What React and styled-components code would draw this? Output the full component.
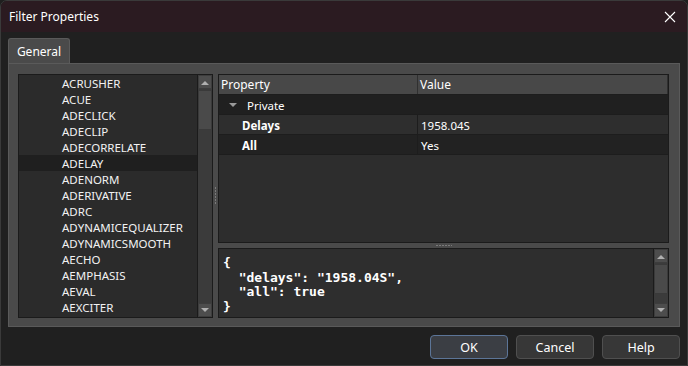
import React from 'react';
import styled, { createGlobalStyle } from 'styled-components';

const GlobalStyle = createGlobalStyle`
  html, body {
    margin: 0;
    padding: 0;
    background: #1f1f1f;
  }
  body {
    font-family: "Noto Sans", "Open Sans", sans-serif;
    font-size: 11.5px;
    color: #f2f2f2;
  }
`;

const Window = styled.div`
  width: 688px;
  height: 366px;
  box-sizing: border-box;
  background: #202020;
  border: 1px solid #3a3a3a;
  border-radius: 7px 7px 0 0;
  overflow: hidden;
  display: flex;
  flex-direction: column;
`;

const TitleBar = styled.div`
  height: 31px;
  flex: none;
  background: #2b1b21;
  display: flex;
  align-items: center;
  justify-content: space-between;
  padding: 0 5px 0 8px;
  font-size: 12px;
  color: #fff;
`;

const CloseButton = styled.div`
  width: 24px;
  height: 24px;
  display: flex;
  align-items: center;
  justify-content: center;
`;

const Body = styled.div`
  flex: 1;
  display: flex;
  flex-direction: column;
  padding: 6px 7px 7px 7px;
`;

const TabRow = styled.div`
  display: flex;
  height: 25px;
`;

const Tab = styled.div`
  width: 62px;
  box-sizing: border-box;
  background: #4a4a4a;
  border: 1px solid #5a5a5a;
  border-bottom: none;
  border-radius: 3px 3px 0 0;
  display: flex;
  align-items: center;
  justify-content: center;
  padding-top: 1px;
  font-size: 12px;
  color: #fff;
`;

const Panel = styled.div`
  height: 264px;
  box-sizing: border-box;
  background: #4a4a4a;
  border: 1px solid #5a5a5a;
  padding: 10px 10px 8px 9px;
  display: flex;
`;

const ListBox = styled.div`
  width: 195px;
  box-sizing: border-box;
  border: 1px solid #1b1b1b;
  background: #2b2b2b;
  display: flex;
`;

const ListItems = styled.div`
  flex: 1;
  overflow: hidden;
`;

const ListItem = styled.div`
  height: 16px;
  line-height: 17px;
  padding-left: 43px;
  background: ${(p) => (p.$selected ? '#1f1f1f' : 'transparent')};
  white-space: nowrap;
`;

const ScrollBar = styled.div`
  width: 14px;
  background: #3b3b3b;
  display: flex;
  flex-direction: column;
  border-left: 1px solid #1b1b1b;
`;

const ScrollButton = styled.div`
  height: 14px;
  flex: none;
  box-sizing: border-box;
  background: #4d4d4d;
  border: 1px solid #3d3d3d;
  display: flex;
  align-items: center;
  justify-content: center;
`;

const Thumb = styled.div`
  height: ${(p) => p.$size}px;
  flex: none;
  margin-top: 1px;
  box-sizing: border-box;
  background: #4a4a4a;
  border: 1px solid #3a3a3a;
  border-radius: 1px;
`;

const Track = styled.div`
  flex: 1;
`;

const VSplitter = styled.div`
  width: 5px;
  display: flex;
  align-items: center;
  justify-content: center;
`;

const VGrip = styled.div`
  width: 1px;
  height: 18px;
  background: repeating-linear-gradient(to bottom, #7a7a7a 0 2px, transparent 2px 3px);
`;

const RightColumn = styled.div`
  flex: 1;
  display: flex;
  flex-direction: column;
`;

const Grid = styled.div`
  height: 169px;
  box-sizing: border-box;
  border: 1px solid #1b1b1b;
  background: #2d2d2d;
`;

const GridRow = styled.div`
  display: grid;
  grid-template-columns: 199px 1fr;
  height: 20px;
  background: ${(p) => p.$bg};
  border-bottom: 1px solid #1d1d1d;
  box-sizing: border-box;
`;

const HeaderCell = styled.div`
  display: flex;
  align-items: center;
  padding-left: 2px;
  background: #484848;
  border-right: 1px solid #303030;
  font-size: 12px;
  color: #fff;
`;

const Cell = styled.div`
  display: flex;
  align-items: center;
  padding-top: 1px;
  padding-left: ${(p) => p.$indent || 3}px;
  font-weight: ${(p) => (p.$bold ? 700 : 400)};
  color: #fff;
  border-right: ${(p) => (p.$divider ? '1px solid #1d1d1d' : 'none')};
`;

const Caret = styled.span`
  width: 0;
  height: 0;
  border-left: 4px solid transparent;
  border-right: 4px solid transparent;
  border-top: 4px solid #9a9a9a;
  margin: 0 10px 0 7px;
`;

const HSplitter = styled.div`
  height: 5px;
  display: flex;
  align-items: center;
  justify-content: center;
`;

const HGrip = styled.div`
  width: 16px;
  height: 1px;
  background: repeating-linear-gradient(to right, #7a7a7a 0 2px, transparent 2px 3px);
`;

const CodeBox = styled.div`
  flex: 1;
  box-sizing: border-box;
  border: 1px solid #1b1b1b;
  background: #2e2e2e;
  display: flex;
`;

const Code = styled.pre`
  flex: 1;
  margin: 0;
  padding: 7px 0 0 4px;
  font-family: "DejaVu Sans Mono", "Liberation Mono", monospace;
  font-weight: 700;
  font-size: 13px;
  line-height: 14.6px;
  color: #fff;
`;

const ButtonRow = styled.div`
  display: flex;
  justify-content: flex-end;
  gap: 8px;
  margin-top: 8px;
`;

const Button = styled.button`
  width: 78px;
  height: 24px;
  box-sizing: border-box;
  background: ${(p) => (p.$primary ? '#3b3e44' : '#373737')};
  border: 1px solid ${(p) => (p.$primary ? '#5c7598' : '#4f4f4f')};
  border-radius: 4px;
  color: #fff;
  font-family: "Noto Sans", "Open Sans", sans-serif;
  font-size: 12.5px;
  padding: 0;
`;

const Arrow = ({ up }) => (
  <svg width="8" height="5" viewBox="0 0 8 5">
    <path d={up ? 'M0 5 L4 1 L8 5 Z' : 'M0 0 L4 4 L8 0 Z'} fill="#b0b0b0" />
  </svg>
);

const VScroll = ({ thumb }) => (
  <ScrollBar>
    <ScrollButton><Arrow up /></ScrollButton>
    <Thumb $size={thumb} />
    <Track />
    <ScrollButton><Arrow /></ScrollButton>
  </ScrollBar>
);

const filters = [
  'ACRUSHER', 'ACUE', 'ADECLICK', 'ADECLIP', 'ADECORRELATE', 'ADELAY',
  'ADENORM', 'ADERIVATIVE', 'ADRC', 'ADYNAMICEQUALIZER', 'ADYNAMICSMOOTH',
  'AECHO', 'AEMPHASIS', 'AEVAL', 'AEXCITER',
];

const json = `{
  "delays": "1958.04S",
  "all": true
}`;

const App = () => (
  <Window>
    <GlobalStyle />
    <TitleBar>
      <span>Filter Properties</span>
      <CloseButton>
        <svg width="12" height="12" viewBox="0 0 12 12">
          <path d="M1 1 L11 11 M11 1 L1 11" stroke="#fff" strokeWidth="1.1" />
        </svg>
      </CloseButton>
    </TitleBar>
    <Body>
      <TabRow>
        <Tab>General</Tab>
      </TabRow>
      <Panel>
        <ListBox>
          <ListItems>
            {filters.map((f) => (
              <ListItem key={f} $selected={f === 'ADELAY'}>{f}</ListItem>
            ))}
          </ListItems>
          <VScroll thumb={40} />
        </ListBox>
        <VSplitter><VGrip /></VSplitter>
        <RightColumn>
          <Grid>
            <GridRow $bg="#484848">
              <HeaderCell>Property</HeaderCell>
              <HeaderCell>Value</HeaderCell>
            </GridRow>
            <GridRow $bg="#202020">
              <Cell $indent={0}><Caret />Private</Cell>
              <Cell />
            </GridRow>
            <GridRow $bg="#2e2e2e">
              <Cell $indent={23} $bold $divider>Delays</Cell>
              <Cell>1958.04S</Cell>
            </GridRow>
            <GridRow $bg="#222222">
              <Cell $indent={23} $bold $divider>All</Cell>
              <Cell>Yes</Cell>
            </GridRow>
          </Grid>
          <HSplitter><HGrip /></HSplitter>
          <CodeBox>
            <Code>{json}</Code>
            <VScroll thumb={30} />
          </CodeBox>
        </RightColumn>
      </Panel>
      <ButtonRow>
        <Button $primary>OK</Button>
        <Button>Cancel</Button>
        <Button>Help</Button>
      </ButtonRow>
    </Body>
  </Window>
);

export default App;
